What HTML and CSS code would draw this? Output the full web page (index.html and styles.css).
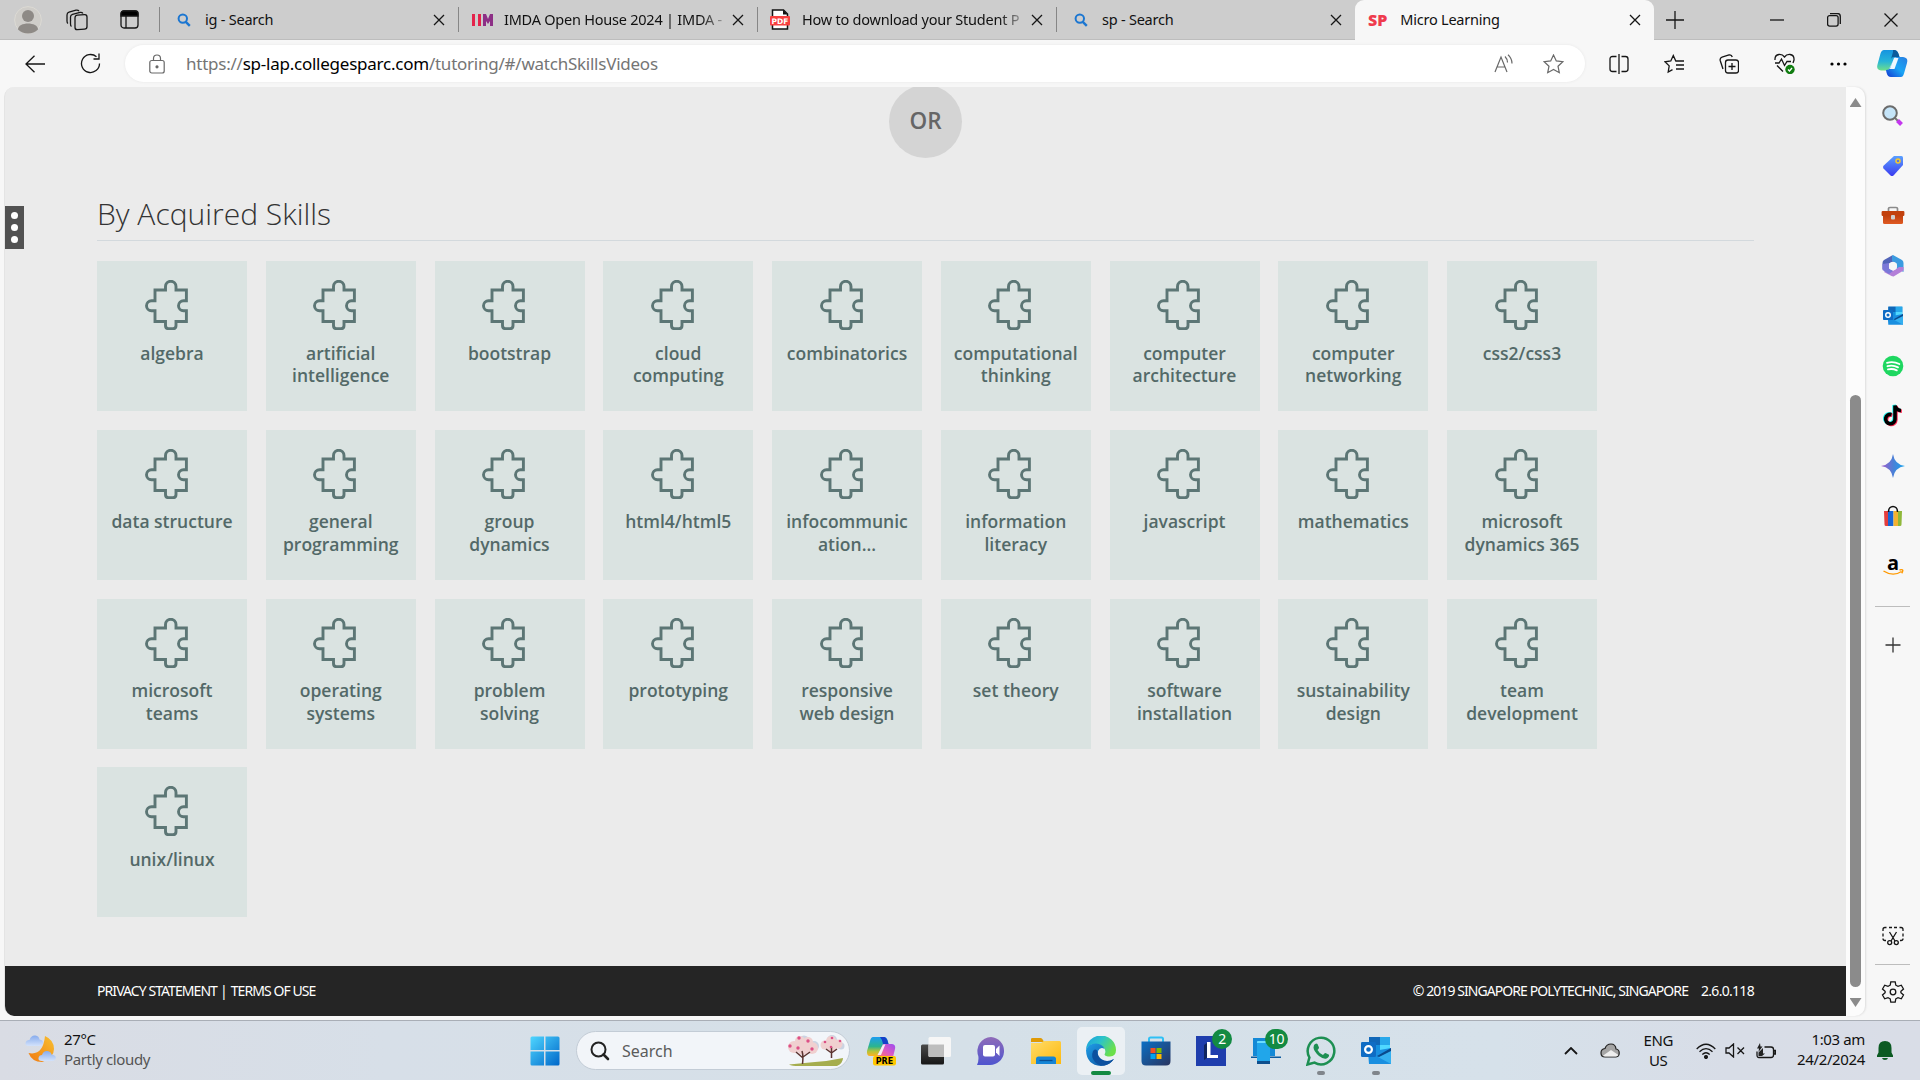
FILE: index.html
```html
<!DOCTYPE html>
<html lang="en">
<head>
<meta charset="utf-8">
<title>Micro Learning</title>
<link rel="stylesheet" href="styles.css">
</head>
<body>
<svg class="defs" aria-hidden="true">
  <defs>
    <symbol id="puzzle" viewBox="0 0 43 50"><path d="M10 10H20.5V6.5A5.2 5.2 0 0 1 31 6.5V10H41.4V20.7H38.5A5 5 0 0 0 38.5 30.7H41.4V41.5H31V45.5Q31 48.7 28 48.7H23.5Q20.5 48.7 20.5 45.5V41.5H10V30.7H6.5A5 5 0 0 1 6.5 20.7H10Z"/></symbol>
    <symbol id="close" viewBox="0 0 12 12"><path d="M1 1L11 11M11 1L1 11"/></symbol>
    <symbol id="lens" viewBox="0 0 14 14"><circle cx="5.8" cy="5.6" r="4.2" fill="none" stroke="#1b76d1" stroke-width="2"/><path d="M8.8 8.8L12.8 12.8" stroke="#1b76d1" stroke-width="2.4"/></symbol>
    <symbol id="outlook" viewBox="0 0 30 30"><path d="M8 1H29V20H8Z" fill="#1490df"/><path d="M8 1h11v8H8z" fill="#1067b8"/><path d="M19 1h10v8H19z" fill="#28a8ea"/><path d="M19 9h10v6H19z" fill="#50d9ff"/><path d="M7 16L30 12V28H8Z" fill="#1a8fe0"/><path d="M30 13L17 21L30 28Z" fill="#35b0f0"/><path d="M30 12L16 20L18 21L30 15Z" fill="#0a4a8c"/><rect x="0" y="6" width="15" height="15" rx="1.2" fill="#0f6cc4"/><circle cx="7.5" cy="13.5" r="3.4" fill="none" stroke="#fff" stroke-width="2.2"/></symbol>
    <linearGradient id="gWin" x1="0" y1="0" x2="1" y2="1"><stop offset="0" stop-color="#4fd6ff"/><stop offset="1" stop-color="#0067c9"/></linearGradient>
    <linearGradient id="gCop1" x1="0" y1="0" x2="0" y2="1"><stop offset="0" stop-color="#1694e0"/><stop offset=".55" stop-color="#27b4d8"/><stop offset="1" stop-color="#6fe08a"/></linearGradient>
    <linearGradient id="gCop2" x1="1" y1="0" x2="0" y2="1"><stop offset="0" stop-color="#2a7de0"/><stop offset=".5" stop-color="#1aa5f5"/><stop offset="1" stop-color="#1238d0"/></linearGradient>
    <linearGradient id="gPre1" x1="0" y1="0" x2="0" y2="1"><stop offset="0" stop-color="#1d9df0"/><stop offset=".5" stop-color="#2bb58e"/><stop offset=".75" stop-color="#b3c43a"/><stop offset="1" stop-color="#ffb020"/></linearGradient>
    <linearGradient id="gPre2" x1="1" y1="0" x2="0" y2="1"><stop offset="0" stop-color="#9b4cf0"/><stop offset=".55" stop-color="#e05bc0"/><stop offset="1" stop-color="#ff7a5c"/></linearGradient>
    <linearGradient id="gTag" x1="0" y1="0" x2="0" y2="1"><stop offset="0" stop-color="#5aa0ff"/><stop offset="1" stop-color="#3b3bf0"/></linearGradient>
    <linearGradient id="gBox" x1="0" y1="0" x2="0" y2="1"><stop offset="0" stop-color="#b53a0c"/><stop offset="1" stop-color="#e05a22"/></linearGradient>
    <linearGradient id="gStar" x1="0" y1="0" x2="1" y2="0"><stop offset="0" stop-color="#a35ccc"/><stop offset=".5" stop-color="#4c7fd6"/><stop offset="1" stop-color="#12a4f0"/></linearGradient>
    <linearGradient id="gChat" x1="0" y1="0" x2="0" y2="1"><stop offset="0" stop-color="#8f6bb8"/><stop offset="1" stop-color="#4e55cf"/></linearGradient>
    <linearGradient id="gFold" x1="0" y1="0" x2="1" y2="1"><stop offset="0" stop-color="#ffdc6a"/><stop offset="1" stop-color="#fdb90e"/></linearGradient>
    <linearGradient id="gEdge1" x1="0" y1="0" x2="1" y2=".5"><stop offset="0" stop-color="#1b9de2"/><stop offset=".5" stop-color="#2cc3c9"/><stop offset="1" stop-color="#6be04a"/></linearGradient>
    <linearGradient id="gEdge2" x1="0" y1="0" x2="1" y2="1"><stop offset="0" stop-color="#1f9fe8"/><stop offset="1" stop-color="#0a4a98"/></linearGradient>
    <linearGradient id="gStore" x1="0" y1="0" x2="1" y2="1"><stop offset="0" stop-color="#0b6fc4"/><stop offset="1" stop-color="#2a3560"/></linearGradient>
    <linearGradient id="gMoon" x1="1" y1="0" x2="0" y2="1"><stop offset="0" stop-color="#f8c030"/><stop offset="1" stop-color="#f07a12"/></linearGradient>
    <linearGradient id="gCloud" x1="0" y1="0" x2="0" y2="1"><stop offset="0" stop-color="#86abed"/><stop offset="1" stop-color="#d3e2fb"/></linearGradient>
    <linearGradient id="gDark" x1="0" y1="0" x2="0" y2="1"><stop offset="0" stop-color="#4a4a4a"/><stop offset="1" stop-color="#161616"/></linearGradient>
  </defs>
</svg>

<header class="tabbar">
  <div class="tab-tools">
    <svg class="avatar" width="28" height="28" viewBox="0 0 28 28"><circle cx="14" cy="14" r="13.4" fill="#cfcdc9" stroke="#dcdad4"/><circle cx="14" cy="10" r="6" fill="#8e8a86"/><path d="M4 23.5C4 15.5 24 15.5 24 23.5Q20 27.4 14 27.4T4 23.5Z" fill="#8e8a86"/></svg>
    <svg class="line workspaces" width="22" height="22" viewBox="0 0 22 22"><rect x="9" y="6" width="12" height="14.5" rx="2.5" transform="skewY(-4) translate(0 1)"/><path d="M5.5 17.5Q4.5 17 4.5 15V8Q4.5 6 6.5 5.4L14 3.4Q16 3 17 4.5M2 14.5Q1 14 1 12V6Q1 3.8 3 3.2L10 1.2Q12 .8 13 2"/></svg>
    <svg class="line" width="19" height="19" viewBox="0 0 19 19"><rect x="1" y="1" width="17" height="17" rx="3"/><path d="M1 6V3.5Q1 1 3.5 1H15.5Q18 1 18 3.5V6Z" fill="#000"/><path d="M6 6V18"/></svg>
  </div>
  <div class="tab"><svg width="14" height="14"><use href="#lens"/></svg><span class="tab-title">ig - Search</span><svg class="x" width="12" height="12"><use href="#close"/></svg></div>
  <div class="tab tab-imda"><svg width="22" height="14" viewBox="0 0 22 14"><path d="M1 1H4V13H1ZM7 1H10V13H7Z" fill="#e4234b"/><path d="M12 13V1H15L17 6L19 1H22V13H19V8L17 11L15 8V13Z" fill="#8d2f86"/></svg><span class="tab-title">IMDA Open House 2024 | IMDA -</span><svg class="x" width="12" height="12"><use href="#close"/></svg></div>
  <div class="tab tab-pdf"><svg width="20" height="21" viewBox="0 0 20 21"><path d="M2.5 1H13.5L17.5 5V20H2.5Z" fill="#fff" stroke="#111" stroke-width="1.5"/><path d="M13 1V5.5H17.5Z" fill="#111"/><rect x="0" y="7" width="20" height="9.5" rx="1" fill="#f8403f"/><text x="10" y="14.5" text-anchor="middle" class="pdf-text">PDF</text></svg><span class="tab-title">How to download your Student P</span><svg class="x" width="12" height="12"><use href="#close"/></svg></div>
  <div class="tab"><svg width="14" height="14"><use href="#lens"/></svg><span class="tab-title">sp - Search</span><svg class="x" width="12" height="12"><use href="#close"/></svg></div>
  <div class="tab active"><span class="sp-logo">SP</span><span class="tab-title">Micro Learning</span><svg class="x" width="12" height="12"><use href="#close"/></svg></div>
  <svg class="line newtab" width="18" height="18" viewBox="0 0 18 18"><path d="M9 0V18M0 9H18"/></svg>
  <div class="window-controls">
    <svg class="line" width="14" height="14" viewBox="0 0 14 14"><path d="M0 7H14"/></svg>
    <svg class="line" width="14" height="14" viewBox="0 0 14 14"><rect x=".6" y="2.6" width="10.5" height="10.5" rx="2"/><path d="M3 .6H10.5Q13.3 .6 13.3 3.5V11"/></svg>
    <svg class="line" width="14" height="14" viewBox="0 0 14 14"><path d="M.5 .5L13.5 13.5M13.5 .5L.5 13.5"/></svg>
  </div>
</header>

<div class="toolbar">
  <svg class="line back" width="20" height="18" viewBox="0 0 20 18"><path d="M20 9H1M9.5 .7L1 9L9.5 17.3"/></svg>
  <svg class="line reload" width="21" height="21" viewBox="0 0 21 21"><path d="M19.5 10.5A9 9 0 1 1 16.5 3.8M19 .5V6H13.5"/></svg>
  <div class="address">
    <svg class="grey-line" width="16" height="20" viewBox="0 0 16 20"><rect x=".8" y="6.5" width="14.4" height="12.5" rx="2"/><path d="M4.5 6.5V4.5A3.5 3.5 0 0 1 11.5 4.5V6.5"/><circle cx="8" cy="12.8" r="1" fill="#555"/></svg>
    <span class="url">https://<span class="host">sp-lap.collegesparc.com</span>/tutoring/#/watchSkillsVideos</span>
    <svg class="grey-line read" width="20" height="20" viewBox="0 0 20 20"><path d="M1 18L7 3L13 18M3 13H11M11 2.5Q13.5 5 13.5 8.5M14 .8Q18 4.5 18 9.5"/></svg>
    <svg class="grey-line" width="21" height="20" viewBox="0 0 21 20"><path d="M10.5 1L13.3 6.9L19.8 7.7L15 12.2L16.3 18.7L10.5 15.5L4.7 18.7L6 12.2L1.2 7.7L7.7 6.9Z"/></svg>
  </div>
  <div class="actions">
    <svg class="line" width="20" height="20" viewBox="0 0 20 20"><path d="M10 0V20M7.5 2.5H3.5Q1 2.5 1 5V15Q1 17.5 3.5 17.5H7.5M12.5 2.5H16.5Q19 2.5 19 5V15Q19 17.5 16.5 17.5H12.5"/></svg>
    <svg class="line" width="20" height="20" viewBox="0 0 20 20"><path d="M13.5 7H11.8L9.3 1.5L6.8 7L1 7.8L5.2 11.9L4.2 18L8.5 15.6M13.5 7H20M12 11H20M12 15H20"/></svg>
    <svg class="line" width="20" height="20" viewBox="0 0 20 20"><rect x="6.5" y="6" width="13" height="13" rx="2.5"/><path d="M13 9V16M9.5 12.5H16.5M4 15L1.2 6.5Q.7 4 3 3.2L10 1Q12.5 .4 13.3 3"/></svg>
    <svg class="line" width="21" height="21" viewBox="0 0 21 21"><path d="M1 7Q.6 2 5 1.5Q8.5 1.2 10.5 4Q12.5 1.2 16 1.5Q20.4 2 20 7L19 10M1 10H5L7.5 6L10.5 12.5L13 8.5H17M3 12.5L9 18.5"/><circle cx="16" cy="16.5" r="4.7" fill="#107c10" stroke="none"/><path d="M14 16.5L15.5 18L18 15" stroke="#fff"/></svg>
    <svg width="17" height="4" viewBox="0 0 17 4"><circle cx="2" cy="2" r="1.6"/><circle cx="8.5" cy="2" r="1.6"/><circle cx="15" cy="2" r="1.6"/></svg>
    <svg class="copilot" width="31" height="27" viewBox="0 0 31 27"><path d="M7 0H17Q20.5 0 21.5 4L22.5 7H18L12 19Q11 21 8 20.5H4Q-1 20 .5 14.5L3.5 3.5Q4.5 0 7 0Z" fill="url(#gCop1)"/><path d="M16 0H18Q21 .5 22.5 7H17Q14.5 7 14 9L16 2Z" fill="#0c5c9c"/><path d="M24 27H14Q10.5 27 9.5 22.5L9 20Q12.5 20 13.5 17L16.5 8.5Q17.5 7 20 7H26Q31.5 7.5 30 13L27 23.5Q26 27 24 27Z" fill="url(#gCop2)"/><path d="M17 8L21.5 8L17.5 19H12.8Z" fill="#eef8fd"/></svg>
  </div>
</div>

<div class="workspace">
  <main class="page">
    <div class="or-row"><div class="or">OR</div></div>
    <section class="skills">
      <h1>By Acquired Skills</h1>
      <ul class="grid">
        <li><svg><use href="#puzzle"/></svg>algebra</li>
        <li><svg><use href="#puzzle"/></svg>artificial<br>intelligence</li>
        <li><svg><use href="#puzzle"/></svg>bootstrap</li>
        <li><svg><use href="#puzzle"/></svg>cloud<br>computing</li>
        <li><svg><use href="#puzzle"/></svg>combinatorics</li>
        <li><svg><use href="#puzzle"/></svg>computational<br>thinking</li>
        <li><svg><use href="#puzzle"/></svg>computer<br>architecture</li>
        <li><svg><use href="#puzzle"/></svg>computer<br>networking</li>
        <li><svg><use href="#puzzle"/></svg>css2/css3</li>
        <li><svg><use href="#puzzle"/></svg>data structure</li>
        <li><svg><use href="#puzzle"/></svg>general<br>programming</li>
        <li><svg><use href="#puzzle"/></svg>group<br>dynamics</li>
        <li><svg><use href="#puzzle"/></svg>html4/html5</li>
        <li><svg><use href="#puzzle"/></svg>infocommunic<br>ation...</li>
        <li><svg><use href="#puzzle"/></svg>information<br>literacy</li>
        <li><svg><use href="#puzzle"/></svg>javascript</li>
        <li><svg><use href="#puzzle"/></svg>mathematics</li>
        <li><svg><use href="#puzzle"/></svg>microsoft<br>dynamics 365</li>
        <li><svg><use href="#puzzle"/></svg>microsoft<br>teams</li>
        <li><svg><use href="#puzzle"/></svg>operating<br>systems</li>
        <li><svg><use href="#puzzle"/></svg>problem<br>solving</li>
        <li><svg><use href="#puzzle"/></svg>prototyping</li>
        <li><svg><use href="#puzzle"/></svg>responsive<br>web design</li>
        <li><svg><use href="#puzzle"/></svg>set theory</li>
        <li><svg><use href="#puzzle"/></svg>software<br>installation</li>
        <li><svg><use href="#puzzle"/></svg>sustainability<br>design</li>
        <li><svg><use href="#puzzle"/></svg>team<br>development</li>
        <li><svg><use href="#puzzle"/></svg>unix/linux</li>
      </ul>
    </section>
    <footer class="footer">
      <div class="links"><span>PRIVACY STATEMENT</span><i>|</i><span>TERMS OF USE</span></div>
      <div class="links"><span>© 2019 SINGAPORE POLYTECHNIC, SINGAPORE</span><span class="version">2.6.0.118</span></div>
    </footer>
    <div class="handle"><i></i><i></i><i></i></div>
  </main>
  <div class="scrollbar"><i class="arrow up"></i><i class="thumb"></i><i class="arrow down"></i></div>
  <aside class="sidebar">
    <svg viewBox="0 0 24 24"><path d="M14 14L17 17" stroke="#777" stroke-width="2"/><path d="M16.5 16.5L20.5 20.5" stroke="#c437ee" stroke-width="4"/><circle cx="9" cy="9" r="6.8" fill="#c5e4f8" stroke="#6b6b6b" stroke-width="2"/></svg>
    <svg viewBox="0 0 24 24"><path d="M13 2H20.5Q22 2 22 3.5V11L12.5 21.5Q11 22.5 9.5 21.5L2.5 14.5Q1.5 13 2.5 11.8Z" fill="url(#gTag)"/><circle cx="17" cy="7" r="2" fill="#5b7be0" stroke="#f7c92c" stroke-width="1.5"/></svg>
    <svg viewBox="0 0 24 24"><path d="M7.5 7V4.5Q7.5 3.5 9 3.5H15Q16.5 3.5 16.5 4.5V7" fill="none" stroke="#8a8a8a" stroke-width="1.7"/><rect x="2" y="9" width="20" height="11" rx="1.5" fill="url(#gBox)"/><rect x=".6" y="7" width="22.8" height="5" rx="1" fill="#c2410e"/><rect x="10" y="11" width="4" height="4.5" rx="1" fill="#cfcfcf"/></svg>
    <svg viewBox="0 0 24 24"><path d="M11 1.5L3 6Q1.5 7 1.5 9V15L8 18.5V9.5L14 6.5V3Z" fill="#5164b8"/><path d="M12 1L21 6Q22.5 7 22.5 9V18L15.5 14.5V9.5L11 7V1.5Z" fill="#3b9be0"/><path d="M22.5 13V16.5L13 22.3Q12 22.8 10.5 22L3 18L6 14.5L12 17L18 13Z" fill="#b37fd8"/><path d="M1.5 10V16L8 20L12 17L8 14.5V9Z" fill="#7a78d8"/><circle cx="12" cy="12" r="4.1" fill="#f6f6f6"/></svg>
    <svg viewBox="-3 -3 36 36"><use href="#outlook" width="30" height="30"/></svg>
    <svg viewBox="0 0 24 24"><circle cx="12" cy="12" r="10.3" fill="#1ed760"/><path d="M6 8.8Q12.5 7 18.3 10M6.5 12.2Q12 10.7 17 13.3M7 15.4Q11.5 14.2 15.8 16.3" fill="none" stroke="#fff" stroke-width="1.9" stroke-linecap="round"/></svg>
    <svg viewBox="0 0 24 24"><g fill="none" stroke-width="3.6"><path d="M10.5 10.5A4.7 4.7 0 1 0 14 15.3V1.5Q15 6.3 20 6.5" stroke="#25f4ee" transform="translate(-.9 -.6)"/><path d="M10.5 10.5A4.7 4.7 0 1 0 14 15.3V1.5Q15 6.3 20 6.5" stroke="#fe2c55" transform="translate(.9 .7)"/><path d="M10.5 10.5A4.7 4.7 0 1 0 14 15.3V1.5Q15 6.3 20 6.5" stroke="#000"/></g></svg>
    <svg viewBox="0 0 24 24"><path d="M12 0Q13.5 10.5 24 12Q13.5 13.5 12 24Q10.5 13.5 0 12Q10.5 10.5 12 0Z" fill="url(#gStar)"/></svg>
    <svg viewBox="0 0 24 24"><path d="M3 7H8V22H5Q3.5 22 3.5 20.5Z" fill="#e43d3d"/><path d="M7 7H12.5V22H7Z" fill="#1766d8"/><path d="M12.5 7H17V22H12.5Z" fill="#f3b232"/><path d="M17 7H21L20.5 20.5Q20.5 22 19 22H17Z" fill="#8fb83a"/><path d="M7.5 8C7.5 .5 16.5 .5 16.5 8" fill="none" stroke="#111" stroke-width="1.5"/></svg>
    <svg class="amazon-icon" viewBox="0 0 24 24"><text x="12" y="15.5" text-anchor="middle" class="amazon">a</text><path d="M2.5 17Q12 23 20.5 17.5M18.5 16Q21.5 15.3 21.8 16.3Q21.8 18 20.7 19.3" fill="none" stroke="#f90" stroke-width="1.4"/></svg>
    <hr>
    <svg class="line add" viewBox="0 0 24 24"><path d="M12 4.5V19.5M4.5 12H19.5"/></svg>
    <svg class="line snip" viewBox="0 0 24 24"><path d="M2 7V5.5Q2 3.5 4 3.5H5.5M8 3.5H11M13 3.5H16M18.5 3.5H20Q22 3.5 22 5.5V7M22 9.5V12.5M2 9.5V12.5M2 14.5Q2 16.5 4 16.5H5M22 14.5Q22 16.5 20 16.5H19M8.5 8L14 17M15.5 8L10 17"/><circle cx="8.7" cy="18.6" r="2"/><circle cx="15.3" cy="18.6" r="2"/></svg>
    <hr>
    <svg class="line gear" viewBox="0 0 24 24"><path d="M9.8 1.8H14.2L14.8 5.2L17 6.4L20.3 5.2L22.5 9L19.9 11.2V12.8L22.5 15L20.3 18.8L17 17.6L14.8 18.8L14.2 22.2H9.8L9.2 18.8L7 17.6L3.7 18.8L1.5 15L4.1 12.8V11.2L1.5 9L3.7 5.2L7 6.4L9.2 5.2Z"/><circle cx="12" cy="12" r="2.8"/></svg>
  </aside>
</div>

<div class="taskbar">
  <div class="weather">
    <svg width="32" height="30" viewBox="0 0 32 30"><path d="M20 2Q29 6 29 15T17 28Q7 28 3.5 19Q18 22 20 2Z" fill="url(#gMoon)"/><path d="M4 12Q0 12 .5 9Q1 6 4.5 6Q6 1 10.5 1.5Q14 2 14.5 5.5Q18.5 6 18 9.5Q17.5 12 14 12Z" fill="url(#gCloud)"/><path d="M17 27Q13 27 13.5 24Q14 21 17 21Q18.5 16.5 22.5 17Q26 17.5 26.5 20.5Q31 21 30.8 24Q30.5 27 27 27Z" fill="url(#gCloud)"/></svg>
    <div class="two-line"><div>27°C</div><div class="muted">Partly cloudy</div></div>
  </div>
  <div class="apps">
    <div class="app"><svg width="30" height="30" viewBox="0 0 30 30"><path d="M2 .5H14V14H.5V2Q.5 .5 2 .5ZM15.5 .5H28Q29.5 .5 29.5 2V14H15.5ZM.5 15.5H14V29.5H2Q.5 29.5 .5 28ZM15.5 15.5H29.5V28Q29.5 29.5 28 29.5H15.5Z" fill="url(#gWin)"/></svg></div>
    <div class="search">
      <svg width="20" height="20" viewBox="0 0 20 20"><circle cx="8.5" cy="8.5" r="7" fill="none" stroke="#222" stroke-width="2"/><path d="M13.5 13.5L18 18" stroke="#222" stroke-width="2.6" stroke-linecap="round"/></svg>
      <span>Search</span>
      <svg class="blossom" width="58" height="32" viewBox="0 0 58 32"><path d="M2 29.5Q15 28 28 27Q42 26 56 23Q56 28 50 31H12Q5 31 2 29.5Z" fill="#a5ad4e"/><g fill="#cbd3e2"><circle cx="17" cy="6" r="5.5"/><circle cx="27" cy="11" r="5"/><circle cx="45" cy="5" r="5"/><circle cx="54" cy="11" r="3.5"/></g><g fill="#f0d0d0"><circle cx="7" cy="12" r="6"/><circle cx="13" cy="6" r="5"/><circle cx="21" cy="7" r="5"/><circle cx="25" cy="13" r="6"/><circle cx="16" cy="14" r="6"/><circle cx="38" cy="10" r="4.5"/><circle cx="44" cy="6" r="5"/><circle cx="51" cy="9" r="4.5"/><circle cx="45" cy="12" r="4.5"/></g><path d="M15.5 29Q16.5 21 15 16M16 23L9 17M16 22L23 17M44.5 23V12M44.5 18L39 14M44.5 18L50 14" fill="none" stroke="#5b3430" stroke-width="1.5"/><g fill="#dd4f86"><circle cx="3" cy="11" r="1.7"/><circle cx="12" cy="3" r="1.7"/><circle cx="21" cy="6" r="1.7"/><circle cx="11" cy="13" r="1.7"/><circle cx="25" cy="14" r="1.7"/><circle cx="38" cy="7" r="1.3"/><circle cx="45" cy="3" r="1.3"/><circle cx="53" cy="6" r="1.3"/><circle cx="44" cy="12" r="1.3"/></g></svg>
    </div>
    <div class="app"><svg width="30" height="30" viewBox="0 0 30 30"><path d="M7 1H18Q20.5 1 21.5 4L22.5 8H17L12.5 20H4Q.5 20 1 15L4 5Q5 1 7 1Z" fill="url(#gPre1)"/><path d="M14 1H18.5Q21 1.5 22.5 8H17Q16 3 14 1Z" fill="#1640c8"/><path d="M19 8H26Q30 8.5 29 13L27 21H11.5L16 10Q17 8 19 8Z" fill="url(#gPre2)"/><path d="M16.5 9.5L19.5 8L15 19H11.5Z" fill="#f4eef4"/><rect x="7" y="20" width="23" height="9.5" rx="2" fill="#ffc800"/><text x="18.5" y="27.6" text-anchor="middle" class="pre">PRE</text></svg></div>
    <div class="app"><svg width="30" height="30" viewBox="0 0 30 30"><rect x="0" y="8.5" width="23" height="20" rx="1.5" fill="url(#gDark)"/><rect x="7.5" y="1" width="22.5" height="20" rx="1.5" fill="#f6f6f6"/><path d="M7.5 8.5H23V21H9Q7.5 21 7.5 19.5Z" fill="#bdbdbd"/></svg></div>
    <div class="app"><svg width="30" height="30" viewBox="0 0 30 30"><path d="M15 1A14 14 0 1 1 13 29H1Q3 25 2.3 20A14 14 0 0 1 15 1Z" fill="url(#gChat)"/><rect x="7" y="9" width="12" height="11.5" rx="2" fill="#fff"/><path d="M20 13L23.5 9.5V20L20 16.5Z" fill="#fff"/></svg></div>
    <div class="app"><svg width="30" height="30" viewBox="0 0 30 30"><path d="M0 3Q0 2 1.5 2H9.5Q11 2 12 4L13 6H0Z" fill="#e09a05"/><path d="M0 7H10L13 5H28.5Q30 5 30 6.5V28H0Z" fill="url(#gFold)"/><path d="M5 28V23Q5 20.5 7.5 20.5H22.5Q25 20.5 25 23V28Z" fill="#1585d6"/><path d="M8.5 24.5H21.5" stroke="#0a4f94" stroke-width="1.3"/></svg></div>
    <div class="app current"><svg width="30" height="30" viewBox="0 0 30 30"><path d="M0 14A15 14.5 0 0 1 30 14Q30 20 24 20.5Q19 20.5 18.5 18.5Q20.5 15 18 12Q13 6.5 6 8.5Q2 10 0 14Z" fill="url(#gEdge1)"/><path d="M0 14Q2 7.5 10 7.5Q17 8 18.5 13Q14.5 10.5 12 15Q10 22 17 25Q22 27 28 23Q23 30 15 30Q.5 29 0 14Z" fill="url(#gEdge2)"/><path d="M11.5 15.5Q10 12 7 15Q4.5 21 9 26Q13 30 18 29.5Q24 28.5 28 23Q21 26.5 16 23.5Q11.5 20.5 11.5 15.5Z" fill="#0c509f"/></svg></div>
    <div class="app"><svg width="30" height="30" viewBox="0 0 30 30"><path d="M8 6V3Q8 1.5 9.5 1.5H20.5Q22 1.5 22 3V6" fill="none" stroke="#2fc0f5" stroke-width="2"/><path d="M.5 5.5H29.5V25Q29.5 29.5 25 29.5H5Q.5 29.5 .5 25Z" fill="url(#gStore)"/><path d="M9.5 12H14.5V17H9.5Z" fill="#f25022"/><path d="M15.5 12H20.5V17H15.5Z" fill="#7fba00"/><path d="M9.5 18H14.5V23H9.5Z" fill="#00a4ef"/><path d="M15.5 18H20.5V23H15.5Z" fill="#ffb900"/></svg></div>
    <div class="app"><svg width="30" height="30" viewBox="0 0 30 30"><path d="M0 0H30V30H0Z" fill="#1f3ead"/><path d="M11 7V22L8 24V9Z" fill="#10255f"/><path d="M11 6H14.5V19H22V22H11Z" fill="#fff"/></svg><b class="badge">2</b></div>
    <div class="app"><svg width="30" height="30" viewBox="0 0 30 30"><path d="M2 2H24V20H2Z" fill="#1489d6"/><path d="M0 20.5H30V22H0Z" fill="#0b5a9e"/><rect x="6" y="5" width="13" height="23" rx="1" fill="#21a6ea"/><path d="M6 6Q6 5 7 5H18Q19 5 19 6V7H6Z" fill="#6bdcff"/><path d="M6 25H19V28H6Z" fill="#0e4f8d"/></svg><b class="badge wide">10</b></div>
    <div class="app running"><svg width="30" height="30" viewBox="0 0 30 30"><path d="M1.5 28.5L3.4 21.5A13.3 13.3 0 1 1 8.5 26.6Z" fill="none" stroke="#1d8f52" stroke-width="2.5"/><path d="M8 9Q10 6.5 11.5 8L13 11.5Q13 12.5 11.5 14Q13.5 17.8 17 19Q18.5 17 19.5 17L23 18.7Q23.5 21 20.5 22.5Q17.5 23.5 13 20Q7.5 15 7.5 11.5Z" fill="#1d8f52"/></svg></div>
    <div class="app running"><svg width="30" height="30"><use href="#outlook"/></svg></div>
  </div>
  <div class="tray">
    <svg class="line chevron" width="14" height="8" viewBox="0 0 14 8"><path d="M1 7L7 1L13 7"/></svg>
    <svg class="cloud" width="20" height="15" viewBox="0 0 20 15"><path d="M5 14Q1 14 1 10T5 5.5Q6.5 1 11 1Q15.5 1 16 6Q19.2 6.5 19.2 10T16 14Z" fill="#a5a5a5" stroke="#222" stroke-width="1.2"/><path d="M2.5 13L11 7L18.5 12Q17.5 13.4 16 13.4H5Z" fill="#eee"/></svg>
    <div class="lang"><div>ENG</div><div>US</div></div>
    <svg class="line wifi" width="20" height="16" viewBox="0 0 20 16"><path d="M.7 6Q10-3.5 19.3 6M3.5 8.8Q10 2.5 16.5 8.8M6.3 11.5Q10 8 13.7 11.5"/><circle cx="10" cy="14" r="1.4" fill="#222"/></svg>
    <svg class="line mute" width="20" height="15" viewBox="0 0 20 15"><path d="M1 5H4L8.5 1V14L4 10H1ZM12.5 4.5L19 11M19 4.5L12.5 11"/></svg>
    <svg class="line batt" width="20" height="16" viewBox="0 0 20 16"><path d="M8.5 4H15Q17.5 4 17.5 6.5V12Q17.5 14.5 15 14.5H3Q1 14.5 1 12V8.5M18 7.5V11H19.5V7.5Z"/><path d="M2.5 13V9.5L7 5V10.5H9L6 13ZM4 0L1 5.5H3L2.5 9L6.5 3.5H4.5Z" fill="#222" stroke="none"/></svg>
    <div class="clock two-line"><div>1:03 am</div><div>24/2/2024</div></div>
    <svg class="bell" width="16" height="19" viewBox="0 0 16 19"><path d="M8 0Q14.5 0 14.5 7V11.5L16 14.5V16H0V14.5L1.5 11.5V7Q1.5 0 8 0ZM5 17H11Q10.5 19 8 19T5 17Z" fill="#0b5a22"/></svg>
  </div>
</div>
</body>
</html>
```
FILE: styles.css
```css
* { box-sizing: border-box; }
body { margin: 0; width: 1920px; height: 1080px; overflow: hidden; display: flex; flex-direction: column; background: #f7f7f7; color: #111; font: 15px/20px "Noto Sans", "Open Sans", sans-serif; }
svg { display: block; flex: none; }
.defs { position: absolute; width: 0; height: 0; }
.line, .x { fill: none; stroke: #161616; stroke-width: 1.3; }
.grey-line { fill: none; stroke: #686868; stroke-width: 1.2; }

/* Tab strip */
.tabbar { height: 40px; flex: none; display: flex; align-items: center; background: #cdcdcd; border-bottom: 1px solid #bdbdbd; }
.tab-tools { width: 159px; padding-left: 14px; display: flex; align-items: center; flex: none; }
.workspaces { margin: 0 32px 0 24px; }
.tab { width: 299px; height: 25px; flex: none; display: flex; align-items: center; border-left: 1px solid #868686; padding: 0 13px 0 17px; font-size: 14.5px; letter-spacing: -.23px; }
.tab-title { flex: 1; margin: -2px 0 0 14px; white-space: nowrap; line-height: 24px; }
.tab-imda { padding-left: 12px; }
.tab-imda .tab-title { margin-left: 11px; }
.tab-pdf { padding-left: 12px; }
.tab-imda .tab-title, .tab-pdf .tab-title { margin-right: 5px; mask-image: linear-gradient(90deg, #000 88%, rgba(0, 0, 0, .15)); }
.tab-pdf .tab-title { margin-left: 12px; }
.active { width: 299px; height: 40px; align-self: flex-start; border: 0; background: #f7f7f7; border-radius: 9px 9px 0 0; padding-left: 13px; }
.sp-logo { font: 800 16px/20px "Open Sans", sans-serif; letter-spacing: 0; color: #ef3b4d; }
.active .tab-title { margin-left: 13px; }
.newtab { margin-left: 12px; }
.window-controls { margin-left: auto; margin-right: 22px; display: flex; gap: 43px; }
.pdf-text { font: 700 7.5px "DejaVu Sans", sans-serif; fill: #fff; letter-spacing: 0; }

/* Address bar */
.toolbar { height: 47px; flex: none; display: flex; align-items: center; padding: 0 11px 0 25px; }
.reload { margin: 0 24px 0 35px; }
.address { width: 1460px; height: 37px; flex: none; border-radius: 19px; background: #fff; display: flex; align-items: center; padding: 0 21px 0 24px; box-shadow: 0 0 3px #e6e6e6; }
.url { margin-left: 21px; font-size: 17px; line-height: 24px; letter-spacing: -.24px; color: #757575; white-space: nowrap; }
.host { color: #000; }
.read { margin: 0 29px 0 auto; }
.actions { flex: 1; display: flex; align-items: center; gap: 35px; padding-left: 24px; }
.copilot { margin-left: -5px; }

/* Page */
.workspace { height: 933px; flex: none; display: flex; padding-left: 4px; }
.page { position: relative; width: 1842px; height: 929px; background: #ebebeb; border-radius: 10px 0 0 10px; overflow: hidden; display: flex; flex-direction: column; border-left: 1px solid #e4e4e4; }
.or-row { height: 71px; display: flex; justify-content: center; align-items: flex-end; flex: none; }
.or { width: 73px; height: 73px; border-radius: 50%; background: #d4d4d4; color: #666; font: 550 22.5px/71px "Open Sans", sans-serif; text-align: center; flex: none; }
.skills { flex: 1; padding: 34px 92px 0; }
h1 { margin: 0; height: 49px; border-bottom: 1px solid #d3d9dd; font: 300 30px/44px "Open Sans", sans-serif; color: #333; }
.grid { list-style: none; margin: 20px 0 0; padding: 0; display: grid; grid-template-columns: repeat(9, 150px); grid-auto-rows: 150px; gap: 18.75px; }
.grid li { background: #dae3e1; padding-top: 19px; text-align: center; color: #536968; font: 600 17.5px/22.5px "Open Sans", sans-serif; white-space: nowrap; }
.grid svg { width: 43px; height: 50px; margin: 0 0 11.6px 47.7px; fill: none; stroke: #5c7675; stroke-width: 2.9; }
.footer { height: 50px; flex: none; background: #252525; color: #fff; display: flex; justify-content: space-between; align-items: center; padding: 0 92px; font: 14px/20px "Noto Sans", sans-serif; letter-spacing: -.93px; }
.links { display: flex; align-items: center; white-space: nowrap; }
.links i { font-style: normal; margin: 0 4px 0 3px; }
.version { margin-left: 13px; letter-spacing: -.7px; }
.handle { position: absolute; left: 0; top: 119px; width: 19px; height: 43px; background: #525252; display: flex; flex-direction: column; align-items: center; justify-content: center; gap: 5px; }
.handle i { width: 7px; height: 7px; border-radius: 50%; background: #fff; }
.scrollbar { width: 19px; height: 929px; background: #fcfcfc; border-radius: 0 10px 10px 0; display: flex; flex-direction: column; align-items: center; box-shadow: 1px 0 2px #ddd; padding: 11px 0 9px; }
.arrow { width: 12px; height: 9px; background: #8b8b8b; clip-path: polygon(50% 0, 100% 100%, 0 100%); }
.down { transform: scaleY(-1); }
.thumb { width: 11px; height: 592px; border-radius: 6px; background: #8b8b8b; margin: auto 0 11px; }

/* Browser sidebar */
.sidebar { flex: 1; display: flex; flex-direction: column; align-items: center; padding: 17px 0 0; }
.sidebar svg { width: 24px; height: 24px; margin-bottom: 26px; }
.sidebar hr { width: 35px; border: 0; border-top: 1px solid #bdbdbd; margin: 2px 0 26px; }
.sidebar .add { margin-bottom: auto; stroke: #333; }
.sidebar .snip { margin-bottom: 16px; }
.sidebar .snip + hr { margin: 0 0 15px; }
.sidebar .gear { margin-bottom: 16px; }
.amazon-icon { overflow: visible; }
.amazon { font: 700 20px "Open Sans", sans-serif; }

/* Taskbar */
.taskbar { height: 60px; flex: none; display: grid; grid-template-columns: 521px 1fr auto; align-items: center; border-top: 1px solid #a9aeb6; background: linear-gradient(90deg, #d9dce4, #d7dfe8 20%, #d5e0e8 50%, #d6e1ea 78%, #d8dde7 90%, #d9dde7); letter-spacing: -.36px; }
.weather { display: flex; align-items: center; gap: 7px; padding-left: 25px; }
.weather svg { width: 32px; margin-bottom: 4px; }
.two-line { margin-top: -4px; }
.muted { color: #555; }
.apps { display: flex; align-items: center; gap: 7px; }
.app { position: relative; width: 48px; height: 48px; flex: none; display: grid; place-items: center; border-radius: 5px; }
.current { background: #ebf0f4; }
.current::after, .running::after { content: ""; position: absolute; bottom: 0; left: 20px; width: 8px; height: 4px; border-radius: 2px; background: #80858b; }
.current::after { left: 14px; width: 20px; background: #138a42; }
.badge { position: absolute; left: 25px; top: 2px; width: 20px; height: 20px; border-radius: 10px; background: #138a42; color: #fff; font-weight: 400; font-size: 14px; text-align: center; }
.wide { width: 23px; left: 23px; }
.search { width: 274px; height: 39px; flex: none; border-radius: 20px; background: #f2f5f9; border: 1px solid #c3ccd6; display: flex; align-items: center; padding: 0 4px 0 13px; color: #5b5b5b; font-size: 16px; letter-spacing: 0; }
.search span { margin-left: 12px; }
.blossom { margin-left: auto; }
.pre { font: 700 8px "DejaVu Sans", sans-serif; letter-spacing: 0; }
.tray { display: flex; align-items: center; padding-right: 27px; }
.tray .chevron { stroke-width: 1.8; }
.cloud { margin: 0 23px 0 22px; }
.lang { text-align: center; margin-top: -2px; }
.wifi { margin: 0 9px 0 23px; }
.batt { margin: 0 21px 0 11px; }
.clock { text-align: right; width: 68px; white-space: nowrap; }
.bell { margin-left: 12px; }
```
